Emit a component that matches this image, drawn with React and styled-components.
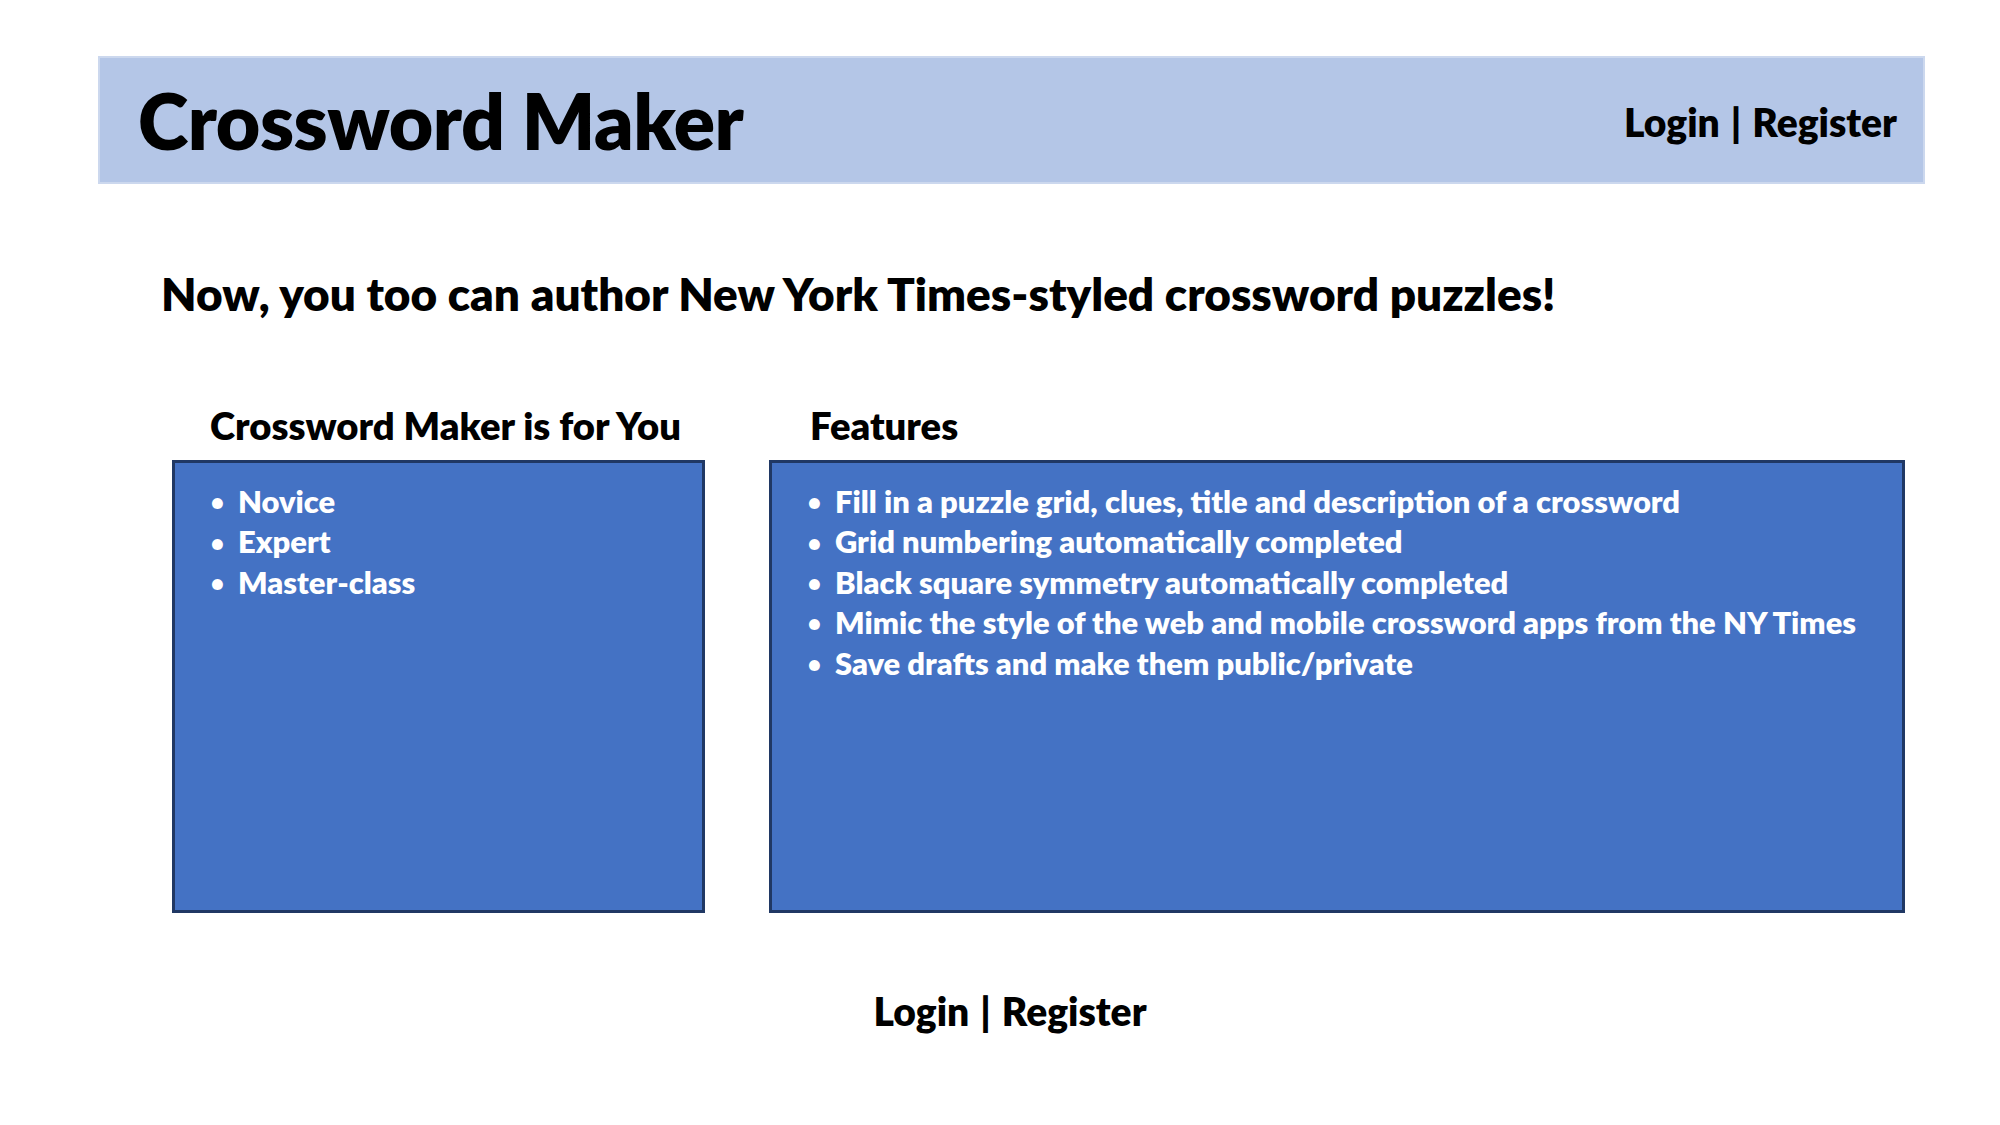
import React from 'react';
import styled, { createGlobalStyle } from 'styled-components';

const GlobalStyle = createGlobalStyle`
  body {
    margin: 0;
    background: #ffffff;
    font-family: Lato, "Open Sans", sans-serif;
    color: #000000;
  }
`;

const Page = styled.div`
  width: 2000px;
  min-height: 1125px;
  padding-top: 56px;
  box-sizing: border-box;
`;

const Header = styled.header`
  margin: 0 75px 0 98px;
  height: 128px;
  box-sizing: border-box;
  background: #b4c6e7;
  border: 2px solid #ccd8ee;
  display: flex;
  align-items: center;
  justify-content: space-between;
  padding: 0 26px 0 38px;
`;

const Title = styled.h1`
  margin: 0;
  font-size: 76.7px;
  font-weight: 800;
  line-height: 1;
  letter-spacing: -0.5px;
`;

const AuthLinks = styled.div`
  font-size: 39px;
  font-weight: 800;
  line-height: 1.2;
  text-align: ${(p) => p.align || 'right'};
  padding-top: ${(p) => p.shift || 0}px;
`;

const Divider = styled.span`
  margin: 0 11px;
`;

const Tagline = styled.h2`
  margin: 82px 0 0 161px;
  font-size: 45.9px;
  font-weight: 800;
  line-height: 1.2;
`;

const Columns = styled.div`
  display: grid;
  grid-template-columns: 533px 1136px;
  column-gap: 64px;
  margin: 82px 0 0 172px;
`;

const Column = styled.section`
  display: flex;
  flex-direction: column;
`;

const ColumnHeading = styled.h3`
  margin: 0 0 11px;
  padding-left: ${(p) => p.indent}px;
  font-size: 38.2px;
  font-weight: 800;
  line-height: 1.2;
`;

const Panel = styled.div`
  height: 453px;
  box-sizing: border-box;
  background: #4472c4;
  border: 3px solid #203864;
  padding: 19px 0 0 36px;
`;

const List = styled.ul`
  list-style: none;
  margin: 0;
  padding: 0;
`;

const Item = styled.li`
  display: grid;
  grid-template-columns: 27px 1fr;
  align-items: center;
  color: #ffffff;
  font-size: 30.9px;
  font-weight: 800;
  line-height: 40.4px;
`;

const Bullet = styled.span`
  font-size: 22px;
  line-height: 1;
`;

const Footer = styled.div`
  margin-top: 75px;
  padding-left: 20px;
`;

const audience = ['Novice', 'Expert', 'Master-class'];

const features = [
  'Fill in a puzzle grid, clues, title and description of a crossword',
  'Grid numbering automatically completed',
  'Black square symmetry automatically completed',
  'Mimic the style of the web and mobile crossword apps from the NY Times',
  'Save drafts and make them public/private',
];

const Auth = (props) => (
  <AuthLinks {...props}>
    Login<Divider>|</Divider>Register
  </AuthLinks>
);

const BulletList = ({ items }) => (
  <List>
    {items.map((item) => (
      <Item key={item}>
        <Bullet>•</Bullet>
        <span>{item}</span>
      </Item>
    ))}
  </List>
);

const App = () => (
  <>
    <GlobalStyle />
    <Page>
      <Header>
        <Title>Crossword Maker</Title>
        <Auth shift={4} />
      </Header>

      <Tagline>Now, you too can author New York Times-styled crossword puzzles!</Tagline>

      <Columns>
        <Column>
          <ColumnHeading indent={38}>Crossword Maker is for You</ColumnHeading>
          <Panel>
            <BulletList items={audience} />
          </Panel>
        </Column>
        <Column>
          <ColumnHeading indent={41}>Features</ColumnHeading>
          <Panel>
            <BulletList items={features} />
          </Panel>
        </Column>
      </Columns>

      <Footer>
        <Auth align="center" />
      </Footer>
    </Page>
  </>
);

export default App;
